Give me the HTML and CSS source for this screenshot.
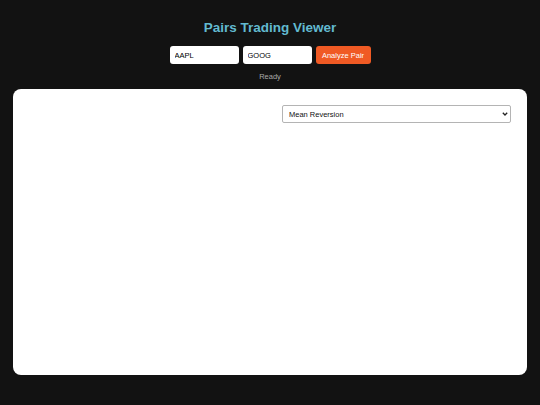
FILE: index.html
```html
<!DOCTYPE html>
<html lang="en">
<head>
<meta charset="utf-8">
<title>Pairs Trading Viewer</title>
<link rel="stylesheet" href="styles.css">
</head>
<body>
<div class="app">
  <h1 class="title">Pairs Trading Viewer</h1>
  <div class="controls">
    <input class="ticker" type="text" value="AAPL">
    <input class="ticker" type="text" value="GOOG">
    <button class="analyze">Analyze Pair</button>
  </div>
  <div class="status">Ready</div>
  <div class="card">
    <div class="chart-area"></div>
    <div class="options">
      <select class="strategy">
        <option>Mean Reversion</option>
        <option>Momentum</option>
      </select>
      <svg class="chevron" width="6" height="4" viewBox="0 0 6 4"><path d="M0.8 0.8 L3 3 L5.2 0.8" fill="none" stroke="#222" stroke-width="1.3"/></svg>
    </div>
  </div>
</div>
</body>
</html>
```
FILE: styles.css
```css
html, body {
  margin: 0;
  padding: 0;
  background: #121212;
  font-family: "Liberation Sans", Arial, sans-serif;
}
.app {
  padding: 20px 13px 30px;
  display: flex;
  flex-direction: column;
  align-items: stretch;
}
.title {
  margin: 0;
  text-align: center;
  font-size: 13.5px;
  line-height: 16px;
  font-weight: bold;
  color: #62bad0;
}
.controls {
  margin-top: 10px;
  display: flex;
  justify-content: center;
  gap: 4px;
}
.ticker {
  box-sizing: border-box;
  width: 69px;
  height: 18px;
  border: none;
  border-radius: 3px;
  background: #fff;
  padding: 0 5px;
  font-family: "Liberation Sans", Arial, sans-serif;
  font-size: 7.5px;
  color: #000;
  outline: none;
}
.analyze {
  box-sizing: border-box;
  width: 55px;
  height: 18px;
  border: none;
  border-radius: 3px;
  background: #f05a24;
  color: #fff;
  font-family: "Liberation Sans", Arial, sans-serif;
  font-size: 7.5px;
  padding: 0;
}
.status {
  margin-top: 8px;
  text-align: center;
  font-size: 7.5px;
  line-height: 9px;
  color: #a8a8a8;
}
.card {
  margin-top: 8px;
  height: 286px;
  box-sizing: border-box;
  background: #fff;
  border-radius: 8px;
  padding: 16px;
  display: grid;
  grid-template-columns: 1fr 1fr;
  column-gap: 24px;
  align-items: start;
}
.options {
  position: relative;
  display: flex;
}
.strategy {
  -webkit-appearance: none;
  appearance: none;
  display: block;
  box-sizing: border-box;
  width: 100%;
  height: 18px;
  margin: 0;
  border: 1px solid #b4b4b4;
  border-radius: 2px;
  background: #fff;
  padding: 0 14px 0 6px;
  font-family: "Liberation Sans", Arial, sans-serif;
  font-size: 7.5px;
  color: #111;
}
.chevron {
  position: absolute;
  right: 3px;
  top: 7px;
  pointer-events: none;
}
```
